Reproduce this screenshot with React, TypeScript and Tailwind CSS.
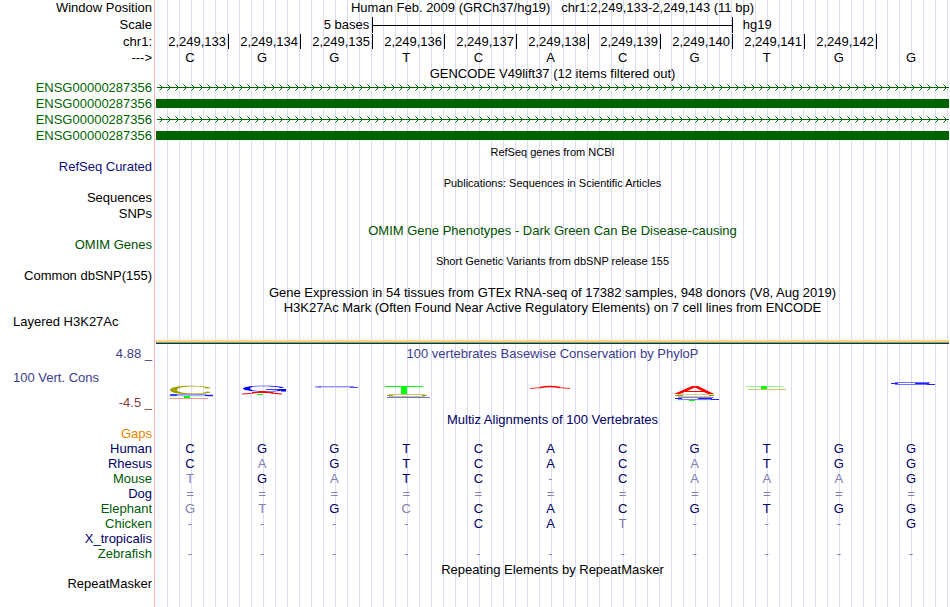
import { ReactNode } from 'react';
import { clsx } from 'clsx';

interface TrackRowProps {
  label?: string;
  labelClass?: string;
  height?: string;
  align?: string;
  children?: ReactNode;
}

interface Species {
  name: string;
  color: string;
  bases: string;
}

const REFERENCE = 'CGGTCACGTGG';

const POSITIONS = [
  '2,249,133',
  '2,249,134',
  '2,249,135',
  '2,249,136',
  '2,249,137',
  '2,249,138',
  '2,249,139',
  '2,249,140',
  '2,249,141',
  '2,249,142',
];

const SPECIES: Species[] = [
  { name: 'Human', color: 'text-[#000064]', bases: 'CGGTCACGTGG' },
  { name: 'Rhesus', color: 'text-[#000064]', bases: 'CAGTCACATGG' },
  { name: 'Mouse', color: 'text-[#005a0a]', bases: 'TGATC-CAAAG' },
  { name: 'Dog', color: 'text-[#000064]', bases: '===========' },
  { name: 'Elephant', color: 'text-[#005a0a]', bases: 'GTGCCACGTGG' },
  { name: 'Chicken', color: 'text-[#005a0a]', bases: '----CAT---G' },
  { name: 'X_tropicalis', color: 'text-[#000064]', bases: '           ' },
  { name: 'Zebrafish', color: 'text-[#005a0a]', bases: '-----------' },
];

const TrackRow = ({ label, labelClass, height = 'h-4', align = 'text-right', children }: TrackRowProps) => (
  <div className={clsx('flex', height)}>
    <div className={clsx('w-[154px] shrink-0 whitespace-nowrap pr-[2px] leading-4', align, labelClass)}>{label}</div>
    <div className="min-w-0 flex-1 pl-[2px] leading-4">{children}</div>
  </div>
);

const Title = ({ small, className, children }: { small?: boolean; className?: string; children: ReactNode }) => (
  <h2 className={clsx('whitespace-pre text-center', small ? 'text-[11px]' : 'text-[13px]', className)}>{children}</h2>
);

const BaseRow = ({ bases, compare }: { bases: string; compare?: boolean }) => (
  <div className="grid grid-cols-11">
    {bases.split('').map((base, i) => (
      <span
        key={i}
        className={clsx('pr-1 text-center', compare && (base === REFERENCE[i] ? 'text-[#000064]' : 'text-[#8080b2]'))}
      >
        {base}
      </span>
    ))}
  </div>
);

const Intron = ({ id }: { id: string }) => (
  <svg className="block h-4 w-full" aria-hidden="true" shapeRendering="crispEdges">
    <defs>
      <pattern id={id} x="0" y="0" width="8" height="16" patternUnits="userSpaceOnUse">
        <path d="M3 4h1v1h-1zM3 10h1v1h-1z" fill="#80b180" />
        <path d="M4 5h1v1h-1zM5 6h1v1h-1zM5 8h1v1h-1zM4 9h1v1h-1z" fill="#006400" />
      </pattern>
    </defs>
    <rect x="1" y="7" width="100%" height="1" fill="#006400" />
    <rect width="100%" height="16" fill={`url(#${id})`} />
  </svg>
);

const Exon = () => (
  <div className="pt-[3px]">
    <div className="h-[9px] bg-[#006400]" />
  </div>
);

// Stacked per-base scores, one drawing for each column. The y axis starts at the top of the row.
const LOGOS: Record<number, ReactNode> = {
  0: (
    <>
      <path
        d="M55 18.500C51 15 14 14.500 14 20S51 25 55 22L51 21.500C46 24.500 21 24 21 20S46 15.500 50 18.500z"
        fill="#a0a000"
      />
      <path d="M15 24.500h35" stroke="#9090ff" />
      <path d="M14 25.500h36" stroke="#b4b4ff" />
      <path d="M14 25h7M49 25.500h8" stroke="#2020ff" strokeWidth="1.500" />
      <path d="M13 26.500h38" stroke="#c8ffc8" />
      <rect x="28" y="26" width="6" height="2" fill="#00ff00" />
      <path d="M14 28.500h38" stroke="#ff9090" />
    </>
  ),
  1: (
    <>
      <path
        d="M56 17.500C51 15 15 15 15 18.500S49 22.500 53 20.500L53 21.500h5V19H38v.800h13C47 22 22 22 22 18.500S48 16.200 53 18z"
        fill="#0000ff"
      />
      <path d="M14 24q12-.500 18-2.500h4q8 2 18 2.500M24 22.500h21" fill="none" stroke="#ff0000" strokeWidth="1.100" />
      <rect x="29" y="24" width="6" height="1" fill="#00ff00" />
    </>
  ),
  2: (
    <>
      <path d="M18 16.500h36" stroke="#9090ff" />
      <path d="M20 17.500h32" stroke="#d0d0ff" />
      <path d="M15 17h6M50 17.500h8" stroke="#5050ff" />
    </>
  ),
  3: (
    <>
      <rect x="13" y="16" width="38" height="1" fill="#00ff00" />
      <rect x="29" y="16" width="6" height="8" fill="#00ff00" />
      <path d="M17 24.500h36M17 26.500h36" stroke="#c8c860" />
      <path d="M15 25.500h6M50 25.500h5" stroke="#a0a000" />
      <path d="M15 27.500h43" stroke="#7070ff" />
    </>
  ),
  5: (
    <>
      <path d="M14 18.500l12-1M54 18.500l-12-1" stroke="#ff3030" />
      <path d="M24 17.500q10-2 20 0" fill="none" stroke="#ff0000" strokeWidth="1.300" />
    </>
  ),
  7: (
    <>
      <path d="M13 24L31 16h6L53 24H47L34 17.500 19 24z" fill="#ff0000" />
      <path d="M24 21.500h21" stroke="#ff0000" />
      <path d="M16 24.500h37M17 26.500h33" stroke="#d0d080" />
      <path d="M14 25.500h8M48 25.500h5" stroke="#a0a000" />
      <path d="M17 27.500h36M17 29.500h36" stroke="#8080ff" />
      <path d="M14 28.500h7M50 29.500h8M37 28.500h14" stroke="#2020ff" />
      <path d="M13 30.500h38" stroke="#d8ffd8" />
      <rect x="28" y="30" width="6" height="1" fill="#00ff00" />
    </>
  ),
  8: (
    <>
      <path d="M13 16.500h37" stroke="#90ff90" />
      <rect x="28" y="16" width="6" height="3" fill="#00ff00" />
      <path d="M15 19.500h38" stroke="#c8c860" />
    </>
  ),
  10: (
    <>
      <path d="M18 12.500h35M18 14.500h35" stroke="#7070ff" />
      <path d="M14 13.500h7M50 14.500h8M38 13.500h14" stroke="#2020ff" />
    </>
  ),
};

const App = () => (
  <main className="relative bg-white pr-px font-['Liberation_Sans',Arial,sans-serif] text-[13px] text-black">
    {/* Guide lines behind every track */}
    <div className="absolute inset-y-0 left-[154px] right-0 border-l border-[#ffb0b0] pl-3">
      <div className="h-full bg-[repeating-linear-gradient(to_right,#dcdcf5_0px,#dcdcf5_1px,transparent_1px,transparent_12px)]" />
    </div>

    <div className="relative pb-[15px]">
      <TrackRow label="Window Position">
        <Title>Human Feb. 2009 (GRCh37/hg19)   chr1:2,249,133-2,249,143 (11 bp)</Title>
      </TrackRow>
      <TrackRow label="Scale" height="h-[17px] pt-px">
        <div className="grid h-4 grid-cols-11">
          <span className="col-span-3 pr-[3px] text-right">5 bases</span>
          <span className="col-span-5 flex items-center border-x border-black">
            <span className="h-px w-full bg-black" />
          </span>
          <span className="col-span-3 pl-[10px]">hg19</span>
        </div>
      </TrackRow>
      <TrackRow label="chr1:" height="h-[17px] pt-px">
        <div className="grid grid-cols-11 pl-px">
          {POSITIONS.map((position) => (
            <span key={position} className="h-[15px] border-r border-black pr-[2px] text-right">
              {position}
            </span>
          ))}
        </div>
      </TrackRow>
      <TrackRow label="--->">
        <BaseRow bases={REFERENCE} />
      </TrackRow>

      <TrackRow height="h-[14px]">
        <Title>GENCODE V49lift37 (12 items filtered out)</Title>
      </TrackRow>
      <TrackRow label="ENSG00000287356" labelClass="text-[#006400]">
        <Intron id="intron-a" />
      </TrackRow>
      <TrackRow label="ENSG00000287356" labelClass="text-[#006400]">
        <Exon />
      </TrackRow>
      <TrackRow label="ENSG00000287356" labelClass="text-[#006400]">
        <Intron id="intron-b" />
      </TrackRow>
      <TrackRow label="ENSG00000287356" labelClass="text-[#006400]">
        <Exon />
      </TrackRow>

      <TrackRow height="h-[15px]">
        <Title small>RefSeq genes from NCBI</Title>
      </TrackRow>
      <TrackRow label="RefSeq Curated" labelClass="text-[#0c0c78]" />
      <TrackRow height="h-[15px]">
        <Title small>Publications: Sequences in Scientific Articles</Title>
      </TrackRow>
      <TrackRow label="Sequences" />
      <TrackRow label="SNPs" />
      <TrackRow height="h-[15px] pt-px">
        <Title className="text-[#005000]">OMIM Gene Phenotypes - Dark Green Can Be Disease-causing</Title>
      </TrackRow>
      <TrackRow label="OMIM Genes" labelClass="text-[#005000]" />
      <TrackRow height="h-[15px]">
        <Title small>Short Genetic Variants from dbSNP release 155</Title>
      </TrackRow>
      <TrackRow label="Common dbSNP(155)" />
      <TrackRow height="h-[15px] pt-px">
        <Title>Gene Expression in 54 tissues from GTEx RNA-seq of 17382 samples, 948 donors (V8, Aug 2019)</Title>
      </TrackRow>
      <TrackRow height="h-[15px] pt-px">
        <Title>H3K27Ac Mark (Often Found Near Active Regulatory Elements) on 7 cell lines from ENCODE</Title>
      </TrackRow>
      <TrackRow label="Layered H3K27Ac" align="pl-[13px] text-left" height="h-[26px]" />
      <TrackRow height="h-[5px]">
        <div className="h-[2px] bg-[#ffd27f]" />
        <div className="h-px bg-[#64b464]" />
        <div className="h-px bg-[#282850]" />
      </TrackRow>

      <TrackRow label="4.88 _" labelClass="text-[#3c3c8c]" height="h-[25px] pt-px">
        <Title className="text-[#3c3c8c]">100 vertebrates Basewise Conservation by PhyloP</Title>
      </TrackRow>
      <TrackRow label="100 Vert. Cons" labelClass="text-[#3c3c8c]" align="pl-[13px] text-left" height="h-[25px]">
        <div className="grid grid-cols-11">
          {POSITIONS.concat('end').map((position, i) => (
            <svg key={position} className="h-[33px] w-[72px]" viewBox="0 0 72 33" aria-hidden="true">
              {LOGOS[i]}
            </svg>
          ))}
        </div>
      </TrackRow>
      <TrackRow label="-4.5 _" labelClass="text-[#8c3c3c]" height="h-4" />

      <TrackRow height="h-[15px] pt-px">
        <Title className="text-[#000064]">Multiz Alignments of 100 Vertebrates</Title>
      </TrackRow>
      <TrackRow label="Gaps" labelClass="text-[#e68200]" height="h-[15px]" />
      {SPECIES.map(({ name, color, bases }) => (
        <TrackRow key={name} label={name} labelClass={color} height="h-[15px]">
          <BaseRow bases={bases} compare />
        </TrackRow>
      ))}
      <TrackRow height="h-[15px] pt-px">
        <Title>Repeating Elements by RepeatMasker</Title>
      </TrackRow>
      <TrackRow label="RepeatMasker" />
    </div>
  </main>
);

export default App;
